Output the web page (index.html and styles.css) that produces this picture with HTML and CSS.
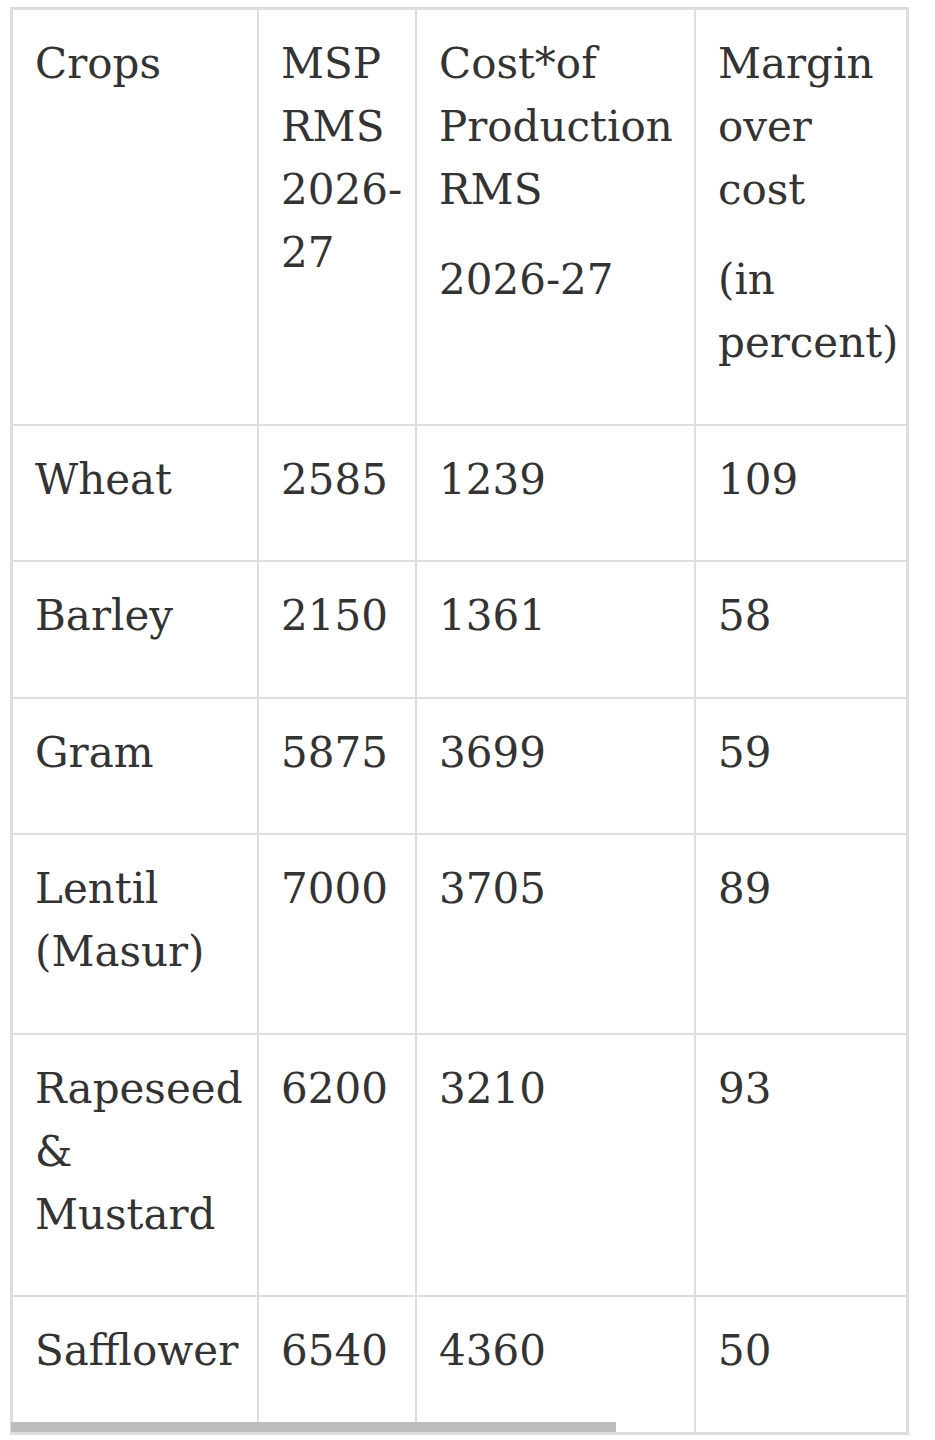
FILE: index.html
```html
<!DOCTYPE html>
<html lang="en">
<head>
<meta charset="utf-8">
<title>MSP RMS 2026-27</title>
<link rel="stylesheet" href="styles.css">
</head>
<body>
<div class="scroller">
  <table class="msp">
    <colgroup>
      <col class="c1"><col class="c2"><col class="c3"><col class="c4">
    </colgroup>
    <thead>
      <tr>
        <th><p>Crops</p></th>
        <th><p>MSP RMS 2026-27</p></th>
        <th><p>Cost*of Production RMS</p><p>2026-27</p></th>
        <th><p>Margin over cost</p><p>(in percent)</p></th>
      </tr>
    </thead>
    <tbody>
      <tr><td><p>Wheat</p></td><td><p>2585</p></td><td><p>1239</p></td><td><p>109</p></td></tr>
      <tr><td><p>Barley</p></td><td><p>2150</p></td><td><p>1361</p></td><td><p>58</p></td></tr>
      <tr><td><p>Gram</p></td><td><p>5875</p></td><td><p>3699</p></td><td><p>59</p></td></tr>
      <tr><td><p>Lentil (Masur)</p></td><td><p>7000</p></td><td><p>3705</p></td><td><p>89</p></td></tr>
      <tr><td><p>Rapeseed &amp; Mustard</p></td><td><p>6200</p></td><td><p>3210</p></td><td><p>93</p></td></tr>
      <tr><td><p>Safflower</p></td><td><p>6540</p></td><td><p>4360</p></td><td><p>50</p></td></tr>
    </tbody>
  </table>
  <div class="thumb"></div>
</div>
</body>
</html>
```
FILE: styles.css
```css
html, body {
  margin: 0;
  padding: 0;
  background: #ffffff;
}

body {
  font-family: "DejaVu Serif", "Liberation Serif", serif;
  color: #333333;
}

.scroller {
  position: relative;
  margin: 7px 0 0 10px;
  width: 893px;
  border: 3px solid #dddddd;
}

.msp {
  width: 893px;
  border-collapse: collapse;
  table-layout: fixed;
}

.c1 { width: 245px; }
.c2 { width: 158px; }
.c3 { width: 279px; }
.c4 { width: 211px; }

.msp th,
.msp td {
  font-weight: normal;
  text-align: left;
  vertical-align: top;
  font-size: 42px;
  line-height: 63px;
  padding: 22px 8px 22.5px 22px;
}

.msp th + th,
.msp td + td {
  border-left: 2px solid #dddddd;
}

.msp tbody tr td {
  border-top: 2px solid #dddddd;
}

.msp p {
  margin: 0 0 27px 0;
}

.thumb {
  position: absolute;
  left: -2px;
  bottom: 0;
  width: 605px;
  height: 10px;
  background: #bdbdbd;
}
```
